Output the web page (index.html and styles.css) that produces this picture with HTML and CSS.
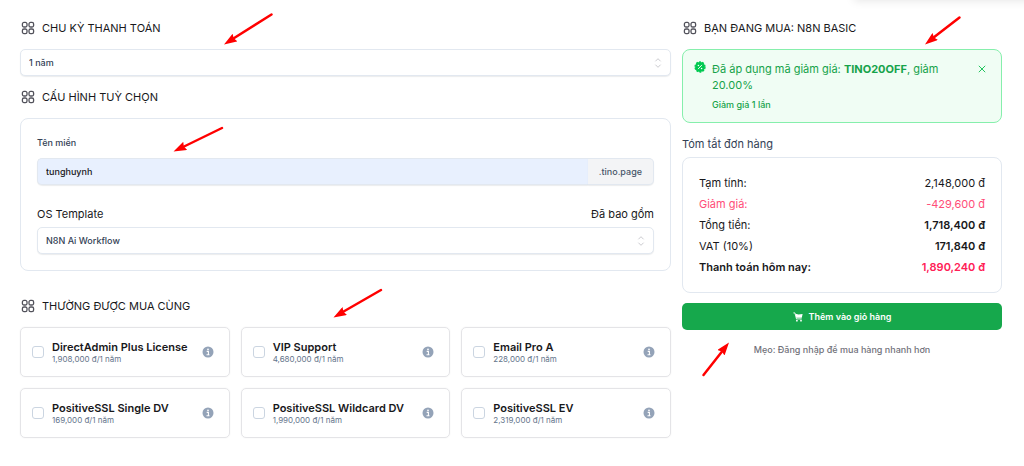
FILE: index.html
```html
<!DOCTYPE html>
<html lang="vi">
  <head>
    <meta charset="UTF-8" />
    <meta name="viewport" content="width=device-width, initial-scale=1.0" />
    <title>N8N Basic</title>
    <link rel="stylesheet" href="styles.css" />
  </head>
  <body>
    <!-- Shared icons -->
    <svg class="sprite" aria-hidden="true">
      <symbol id="icon-grid" viewBox="0 0 14 14">
        <g fill="none" stroke="currentColor" stroke-width="1.3">
          <rect x="1.4" y="1.4" width="4.6" height="4.6" rx="1.6" />
          <rect x="8" y="1.4" width="4.6" height="4.6" rx="1.6" />
          <rect x="1.4" y="8" width="4.6" height="4.6" rx="1.6" />
          <rect x="8" y="8" width="4.6" height="4.6" rx="1.6" />
        </g>
      </symbol>
      <symbol id="icon-sort" viewBox="0 0 8 12">
        <path d="M1.4 4.3 4 1.7l2.6 2.6M1.4 7.7 4 10.3l2.6-2.6" fill="none" stroke="currentColor" />
      </symbol>
      <symbol id="icon-info" viewBox="0 0 12 12">
        <circle cx="6" cy="6" r="5.5" fill="currentColor" />
        <circle cx="6" cy="3.3" r="0.9" fill="#fff" />
        <path d="M4.7 5.4h1.7v3.2M4.5 8.8h3" fill="none" stroke="#fff" stroke-width="1.1" />
      </symbol>
    </svg>

    <div class="topbar-shadow"></div>

    <div class="page">
      <main class="config">
        <h2 class="heading">
          <svg class="heading-icon"><use href="#icon-grid" /></svg>
          <label for="cycle">CHU KỲ THANH TOÁN</label>
        </h2>
        <div class="select-box">
          <select id="cycle" class="field">
            <option>1 năm</option>
          </select>
          <svg class="sort-icon"><use href="#icon-sort" /></svg>
        </div>

        <h2 class="heading">
          <svg class="heading-icon"><use href="#icon-grid" /></svg>
          CẤU HÌNH TUỲ CHỌN
        </h2>
        <section class="card options">
          <label class="small-label" for="domain">Tên miền</label>
          <div class="domain-group">
            <input type="text" id="domain" class="field" value="tunghuynh" />
            <span class="suffix">.tino.page</span>
          </div>
          <div class="option-head">
            <label for="template">OS Template</label>
            <span>Đã bao gồm</span>
          </div>
          <div class="select-box">
            <select id="template" class="field">
              <option>N8N Ai Workflow</option>
            </select>
            <svg class="sort-icon"><use href="#icon-sort" /></svg>
          </div>
        </section>

        <h2 class="heading heading-addons">
          <svg class="heading-icon"><use href="#icon-grid" /></svg>
          THƯỜNG ĐƯỢC MUA CÙNG
        </h2>
        <div class="addons">
          <label class="addon">
            <input type="checkbox" />
            <span class="addon-text">
              <span class="addon-name">DirectAdmin Plus License</span>
              <span class="addon-price">1,908,000 đ/1 năm</span>
            </span>
            <svg class="info-icon"><use href="#icon-info" /></svg>
          </label>
          <label class="addon">
            <input type="checkbox" />
            <span class="addon-text">
              <span class="addon-name">VIP Support</span>
              <span class="addon-price">4,680,000 đ/1 năm</span>
            </span>
            <svg class="info-icon"><use href="#icon-info" /></svg>
          </label>
          <label class="addon">
            <input type="checkbox" />
            <span class="addon-text">
              <span class="addon-name">Email Pro A</span>
              <span class="addon-price">228,000 đ/1 năm</span>
            </span>
            <svg class="info-icon"><use href="#icon-info" /></svg>
          </label>
          <label class="addon">
            <input type="checkbox" />
            <span class="addon-text">
              <span class="addon-name">PositiveSSL Single DV</span>
              <span class="addon-price">169,000 đ/1 năm</span>
            </span>
            <svg class="info-icon"><use href="#icon-info" /></svg>
          </label>
          <label class="addon">
            <input type="checkbox" />
            <span class="addon-text">
              <span class="addon-name">PositiveSSL Wildcard DV</span>
              <span class="addon-price">1,990,000 đ/1 năm</span>
            </span>
            <svg class="info-icon"><use href="#icon-info" /></svg>
          </label>
          <label class="addon">
            <input type="checkbox" />
            <span class="addon-text">
              <span class="addon-name">PositiveSSL EV</span>
              <span class="addon-price">2,319,000 đ/1 năm</span>
            </span>
            <svg class="info-icon"><use href="#icon-info" /></svg>
          </label>
        </div>
      </main>

      <aside class="order">
        <h2 class="heading">
          <svg class="heading-icon"><use href="#icon-grid" /></svg>
          BẠN ĐANG MUA: N8N BASIC
        </h2>
        <div class="coupon">
          <svg class="coupon-icon" viewBox="0 0 12 12">
            <circle cx="6" cy="6" r="4.9" fill="#00c950" />
            <circle cx="6" cy="6" r="5" fill="none" stroke="#00c950" stroke-width="1.3" stroke-dasharray="2 1.14" />
            <path d="M4 8.1 8 3.9" stroke="#fff" stroke-width="0.9" />
            <circle cx="4.4" cy="4.5" r="0.8" fill="#fff" />
            <circle cx="7.6" cy="7.5" r="0.8" fill="#fff" />
          </svg>
          <div class="coupon-text">
            <p>Đã áp dụng mã giảm giá: <strong>TINO20OFF</strong>, giảm 20.00%</p>
            <p class="coupon-note">Giảm giá 1 lần</p>
          </div>
          <button class="close" type="button" aria-label="Đóng">
            <svg viewBox="0 0 8 8"><path d="M0.8 0.8l6.4 6.4M7.2 0.8L0.8 7.2" stroke="currentColor" /></svg>
          </button>
        </div>

        <h3 class="summary-title">Tóm tắt đơn hàng</h3>
        <dl class="card summary">
          <div><dt>Tạm tính:</dt><dd>2,148,000 đ</dd></div>
          <div class="discount"><dt>Giảm giá:</dt><dd>-429,600 đ</dd></div>
          <div><dt>Tổng tiền:</dt><dd class="bold">1,718,400 đ</dd></div>
          <div><dt>VAT (10%)</dt><dd class="bold">171,840 đ</dd></div>
          <div class="total"><dt>Thanh toán hôm nay:</dt><dd>1,890,240 đ</dd></div>
        </dl>

        <button class="buy" type="button">
          <svg viewBox="0 0 10 10">
            <path d="M0.4 0.9h1.5l1.6 6h5.2" fill="none" stroke="currentColor" stroke-width="0.9" />
            <path d="M2.4 1.7l3.1.9 4.1-.5-.8 3.7H3.3z" fill="currentColor" />
            <circle cx="3.9" cy="8.7" r="0.9" fill="currentColor" />
            <circle cx="8" cy="8.7" r="0.9" fill="currentColor" />
          </svg>
          Thêm vào giỏ hàng
        </button>
        <p class="tip">Mẹo: Đăng nhập để mua hàng nhanh hơn</p>
      </aside>
    </div>

    <!-- Guide arrows -->
    <svg class="arrows" width="1024" height="466" aria-hidden="true">
      <defs>
        <marker id="head" viewBox="0 0 13 9" refX="13" refY="4.5" markerWidth="13" markerHeight="9" markerUnits="userSpaceOnUse" orient="auto">
          <path d="M13 4.5 0 0l1.500 4.500L0 9z" fill="#ff0000" />
        </marker>
      </defs>
      <g stroke="#ff0000" stroke-width="2.5" stroke-linecap="round">
        <path d="M271.500 14.500 231 40" />
        <path d="M222 128 181 148" />
        <path d="M381 290 341 313" />
        <path d="M959.500 17.500 931 39.500" />
        <path d="M703.500 375 724 349" />
      </g>
      <g fill="none">
        <path d="M271.500 14.500 224 44.500" marker-end="url(#head)" />
        <path d="M222 128 173.500 151.500" marker-end="url(#head)" />
        <path d="M381 290 333.500 317.500" marker-end="url(#head)" />
        <path d="M959.500 17.500 925 44.500" marker-end="url(#head)" />
        <path d="M703.500 375 729 342.500" marker-end="url(#head)" />
      </g>
    </svg>
  </body>
</html>
```

FILE: styles.css
```css
:root {
  --border: #e2e8f0;
  --text: #18181b;
  --slate: #334155;
  --muted: #64748b;
  --green: #16a34a;
  --pink: #ff2056;
}

* {
  margin: 0;
  padding: 0;
  box-sizing: border-box;
}

body {
  position: relative;
  overflow-x: hidden;
  background-color: #fff;
  color: var(--text);
  font-family: Inter, "Liberation Sans", sans-serif;
  font-size: 11px;
  line-height: 16px;
}

button,
input,
select {
  font-family: inherit;
}

.sprite {
  position: absolute;
  width: 0;
  height: 0;
}

.topbar-shadow {
  position: absolute;
  top: -20px;
  right: -20px;
  width: 190px;
  height: 20px;
  box-shadow: 0 1px 10px rgba(0, 0, 0, 0.1);
}

.page {
  display: grid;
  grid-template-columns: minmax(0, 1fr) 320px;
  gap: 11px;
  padding: 18px 22px 24px 20px;
}

.heading {
  display: flex;
  align-items: center;
  gap: 7px;
  height: 20px;
  margin-bottom: 11px;
  font-size: 11px;
  font-weight: 400;
}

.heading-icon {
  width: 14px;
  height: 14px;
  margin-left: 1px;
  color: #52525b;
}

.card {
  border: 1px solid var(--border);
  border-radius: 8px;
}

.select-box {
  position: relative;
}

.field {
  display: block;
  width: 100%;
  height: 27px;
  padding: 0 8px;
  border: 1px solid var(--border);
  border-radius: 5px;
  background-color: #fff;
  box-shadow: 0 1px 1px rgba(15, 23, 42, 0.08);
  color: var(--slate);
  font-size: 9px;
  font-weight: 500;
  appearance: none;
}

.sort-icon {
  position: absolute;
  top: 8px;
  right: 9px;
  width: 8px;
  height: 12px;
  color: #cbcbd0;
  pointer-events: none;
}

.config > .select-box {
  margin-bottom: 11px;
}

.options {
  padding: 16px;
}

.small-label {
  display: block;
  margin-bottom: 7px;
  color: var(--slate);
  font-size: 9px;
  font-weight: 500;
}

.domain-group {
  display: flex;
}

.domain-group .field {
  flex: 1;
  min-width: 0;
  border-right: none;
  border-radius: 5px 0 0 5px;
  background-color: #e8f0fe;
  color: var(--text);
}

.suffix {
  padding: 5px 11px;
  border: 1px solid var(--border);
  border-left: none;
  border-radius: 0 5px 5px 0;
  background-color: #f3f4f6;
  box-shadow: 0 1px 1px rgba(15, 23, 42, 0.08);
  color: #475569;
  font-size: 9px;
  font-weight: 500;
  line-height: 15px;
}

.option-head {
  display: flex;
  justify-content: space-between;
  margin: 21px 0 5px;
}

.heading-addons {
  margin-top: 25px;
}

.addons {
  display: grid;
  grid-template-columns: repeat(3, minmax(0, 1fr));
  gap: 11px;
}

.addon {
  display: flex;
  align-items: center;
  height: 50px;
  padding: 0 15px 0 11px;
  border: 1px solid #e4e4e7;
  border-radius: 5px;
  box-shadow: 0 0 2px rgba(0, 0, 0, 0.06);
}

.addon input {
  width: 12px;
  height: 12px;
  border: 1px solid #cbd5e1;
  border-radius: 3px;
  background-color: #fff;
  appearance: none;
}

.addon input:checked {
  background-color: var(--green);
}

.addon-text {
  flex: 1;
  margin-left: 8px;
}

.addon-name,
.addon-price {
  display: block;
  white-space: nowrap;
}

.addon-name {
  font-weight: 600;
  line-height: 14px;
}

.addon-price {
  color: var(--muted);
  font-size: 8px;
  line-height: 11px;
}

.info-icon {
  width: 12px;
  height: 12px;
  color: #94a3b8;
}

.coupon {
  display: flex;
  align-items: flex-start;
  min-height: 74px;
  padding: 11px 15px 9px 11px;
  border: 1px solid #86efac;
  border-radius: 8px;
  background-color: #f0fdf4;
  color: var(--green);
}

.coupon-icon {
  width: 12px;
  height: 12px;
}

.coupon-text {
  flex: 1;
  margin: 0 32px 0 6px;
}

.coupon-note {
  margin-top: 4px;
  font-size: 9px;
  font-weight: 500;
}

.close {
  border: none;
  background: none;
  color: #22c55e;
  cursor: pointer;
}

.close svg {
  display: block;
  width: 8px;
  height: 8px;
  margin-top: 4px;
}

.summary-title {
  margin: 13px 0 5px;
  color: var(--slate);
  font-size: 11px;
  font-weight: 400;
}

.summary {
  padding: 15px 16px 14px;
}

.summary div {
  display: flex;
  justify-content: space-between;
  line-height: 21px;
}

.summary .discount {
  color: #ff4d78;
}

.summary .bold,
.summary .total {
  font-weight: 600;
}

.summary .total dd {
  color: var(--pink);
}

.buy {
  display: flex;
  align-items: center;
  justify-content: center;
  gap: 6px;
  width: 100%;
  height: 27px;
  margin-top: 10px;
  border: none;
  border-radius: 5px;
  background-color: #16a84c;
  color: #fff;
  font-size: 9px;
  font-weight: 600;
  cursor: pointer;
}

.buy svg {
  width: 10px;
  height: 10px;
}

.tip {
  margin-top: 12px;
  color: #71717a;
  font-size: 9px;
  font-weight: 500;
  text-align: center;
}

.arrows {
  position: absolute;
  top: 0;
  left: 0;
  pointer-events: none;
}
```
